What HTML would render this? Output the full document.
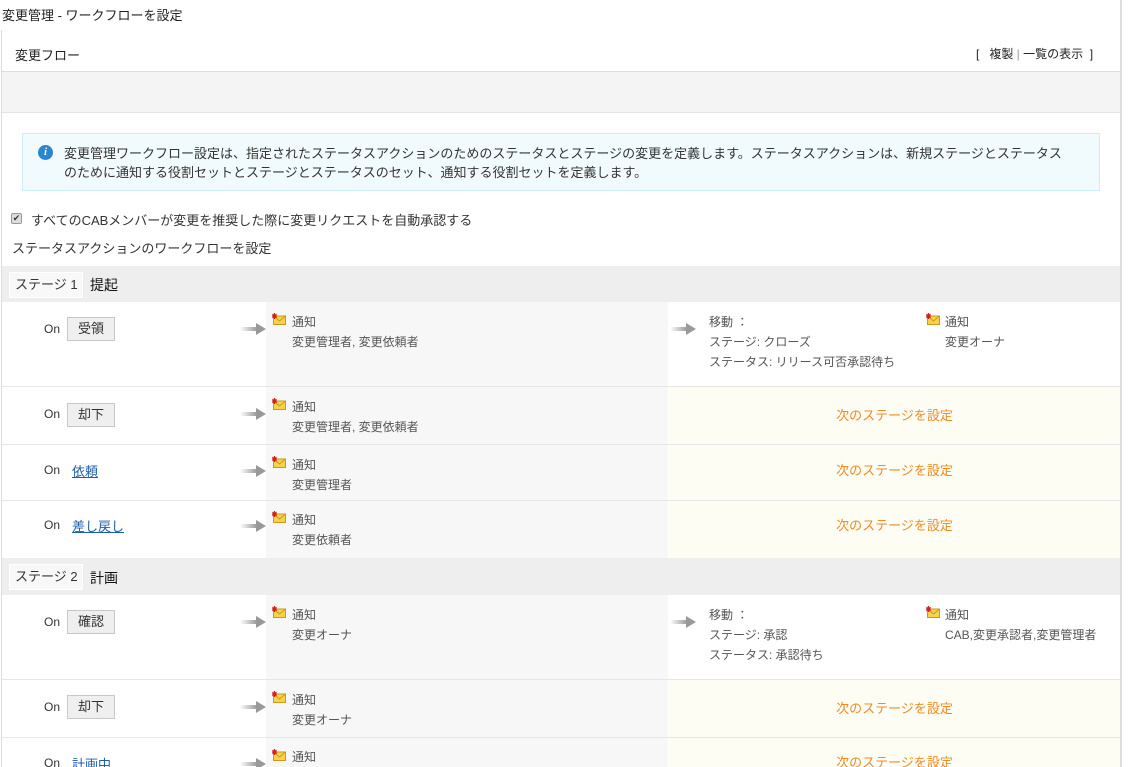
<!DOCTYPE html>
<html style="overflow:hidden;height:767px"><head><meta charset="utf-8"><style>
*{margin:0;padding:0;box-sizing:border-box}
body{width:1135px;height:767px;overflow:hidden;background:#fff;font-family:"Liberation Sans","Noto Sans CJK JP",sans-serif;font-size:12px;color:#333;position:relative}
.a{position:absolute;white-space:nowrap}
.g{color:#555}
.btn{position:absolute;left:67px;width:48px;height:24px;background:#efefef;border:1px solid #c8c8c8;text-align:center;line-height:22px;font-size:13px;color:#333}
.lnk{position:absolute;left:72px;font-size:13px;color:#1d5fa8;text-decoration:underline}
.on{position:absolute;left:44px;font-size:12px;color:#333}
.ncol{position:absolute;left:266px;width:402px;background:#f7f7f7}
.nxt{position:absolute;left:669px;width:451px;background:#fdfdf4;color:#f08a24;font-size:13px;text-align:center}
.sep{position:absolute;left:2px;width:1118px;height:1px;background:#e6e6e6}
.arr{position:absolute;width:26px;height:12px}
.ic{position:absolute;width:14px;height:12px}
.sh{position:absolute;left:2px;width:1118px;background:#eeeeee}
.sl{position:absolute;left:9px;width:74px;height:26px;background:#f8f8f8;border:1px solid #fff;font-size:13px;line-height:24px;padding-left:5px;color:#333}
</style></head><body>
<svg width="0" height="0" style="position:absolute"><defs>
<linearGradient id="gr" x1="0" x2="1"><stop offset="0" stop-color="#fff"/><stop offset="1" stop-color="#999"/></linearGradient>
<g id="env"><rect x="1.5" y="3" width="12" height="8.5" fill="#f7d24a" stroke="#c99a1c" stroke-width="1"/><path d="M1.5 3 L7.5 8 L13.5 3" fill="none" stroke="#c99a1c"/><path d="M2.5 0 L2.5 6 M0 3 L5 3 M0.5 1 L4.5 5 M4.5 1 L0.5 5" stroke="#d0201a" stroke-width="1.2"/></g>
<g id="ar"><rect x="0" y="4" width="17" height="4" fill="url(#gr)"/><path d="M16 0 L26 6 L16 12Z" fill="#999"/></g>
</defs></svg>
<div class="a" style="left:2px;top:5px;font-size:13px;color:#222">変更管理 - ワークフローを設定</div>
<div class="a" style="left:15px;top:45px;font-size:13px;color:#222">変更フロー</div>
<div class="a" style="left:976px;top:45px;font-size:12px;color:#222">[&nbsp;&nbsp; 複製 <span style="color:#999">|</span> 一覧の表示 &nbsp;]</div>
<div class="a" style="left:1px;top:30px;width:1px;height:737px;background:#ddd"></div>
<div class="a" style="left:1120px;top:0;width:2px;height:767px;background:#ddd"></div>
<div class="a" style="left:2px;top:71px;width:1118px;height:42px;background:#f4f4f4;border-top:1px solid #ddd;border-bottom:1px solid #e4e4e4"></div>
<div class="a" style="left:22px;top:133px;width:1078px;height:58px;background:#f1fbfd;border:1px solid #cdeef7"></div>
<div class="a" style="left:38px;top:145px;width:15px;height:15px;border-radius:50%;background:#2a86d0;color:#fff;font:bold italic 11px 'Liberation Serif',serif;text-align:center;line-height:15px">i</div>
<div class="a" style="left:64px;top:144px;font-size:13px;line-height:19px;color:#333">変更管理ワークフロー設定は、指定されたステータスアクションのためのステータスとステージの変更を定義します。ステータスアクションは、新規ステージとステータス<br>のために通知する役割セットとステージとステータスのセット、通知する役割セットを定義します。</div>
<div class="a" style="left:11px;top:213px;width:11px;height:11px;background:#ddd;border:1px solid #999;border-radius:2px;font-size:9px;line-height:9px;text-align:center;color:#333">✔</div>
<div class="a" style="left:31px;top:210px;font-size:13px;color:#333">すべてのCABメンバーが変更を推奨した際に変更リクエストを自動承認する</div>
<div class="a" style="left:12px;top:238px;font-size:13px;color:#333">ステータスアクションのワークフローを設定</div>

<div class="sh" style="top:266px;height:36px"></div>
<div class="sl" style="top:272px">ステージ 1</div>
<div class="a" style="left:90px;top:275px;font-size:14px;color:#111">提起</div>

<div class="ncol" style="top:302px;height:84px"></div>
<div class="on" style="top:322px">On</div><div class="btn" style="top:317px">受領</div>
<svg class="arr" style="left:240px;top:323px"><use href="#ar"/></svg>
<svg class="ic" style="left:272px;top:313px"><use href="#env"/></svg>
<div class="a g" style="left:292px;top:312px;line-height:20px">通知<br>変更管理者, 変更依頼者</div>
<svg class="arr" style="left:670px;top:323px"><use href="#ar"/></svg>
<div class="a g" style="left:709px;top:312px;line-height:20px">移動 ：<br>ステージ: クローズ<br>ステータス: リリース可否承認待ち</div>
<svg class="ic" style="left:926px;top:313px"><use href="#env"/></svg>
<div class="a g" style="left:945px;top:312px;line-height:20px">通知<br>変更オーナ</div>
<div class="sep" style="top:386px"></div>

<div class="ncol" style="top:387px;height:57px"></div>
<div class="nxt" style="top:387px;height:57px;line-height:57px">次のステージを設定</div>
<div class="on" style="top:407px">On</div><div class="btn" style="top:403px">却下</div>
<svg class="arr" style="left:240px;top:408px"><use href="#ar"/></svg>
<svg class="ic" style="left:272px;top:398px"><use href="#env"/></svg>
<div class="a g" style="left:292px;top:397px;line-height:20px">通知<br>変更管理者, 変更依頼者</div>
<div class="sep" style="top:444px"></div>

<div class="ncol" style="top:445px;height:55px"></div>
<div class="nxt" style="top:445px;height:55px;line-height:52px">次のステージを設定</div>
<div class="on" style="top:463px">On</div><div class="lnk" style="top:461px">依頼</div>
<svg class="arr" style="left:240px;top:465px"><use href="#ar"/></svg>
<svg class="ic" style="left:272px;top:456px"><use href="#env"/></svg>
<div class="a g" style="left:292px;top:455px;line-height:20px">通知<br>変更管理者</div>
<div class="sep" style="top:500px"></div>

<div class="ncol" style="top:501px;height:57px"></div>
<div class="nxt" style="top:501px;height:57px;line-height:50px">次のステージを設定</div>
<div class="on" style="top:518px">On</div><div class="lnk" style="top:516px">差し戻し</div>
<svg class="arr" style="left:240px;top:520px"><use href="#ar"/></svg>
<svg class="ic" style="left:272px;top:511px"><use href="#env"/></svg>
<div class="a g" style="left:292px;top:510px;line-height:20px">通知<br>変更依頼者</div>

<div class="sh" style="top:558px;height:37px"></div>
<div class="sl" style="top:564px">ステージ 2</div>
<div class="a" style="left:90px;top:568px;font-size:14px;color:#111">計画</div>

<div class="ncol" style="top:595px;height:84px"></div>
<div class="on" style="top:615px">On</div><div class="btn" style="top:610px">確認</div>
<svg class="arr" style="left:240px;top:616px"><use href="#ar"/></svg>
<svg class="ic" style="left:272px;top:606px"><use href="#env"/></svg>
<div class="a g" style="left:292px;top:605px;line-height:20px">通知<br>変更オーナ</div>
<svg class="arr" style="left:670px;top:616px"><use href="#ar"/></svg>
<div class="a g" style="left:709px;top:605px;line-height:20px">移動 ：<br>ステージ: 承認<br>ステータス: 承認待ち</div>
<svg class="ic" style="left:926px;top:606px"><use href="#env"/></svg>
<div class="a g" style="left:945px;top:605px;line-height:20px">通知<br>CAB,変更承認者,変更管理者</div>
<div class="sep" style="top:679px"></div>

<div class="ncol" style="top:680px;height:57px"></div>
<div class="nxt" style="top:680px;height:57px;line-height:57px">次のステージを設定</div>
<div class="on" style="top:700px">On</div><div class="btn" style="top:695px">却下</div>
<svg class="arr" style="left:240px;top:701px"><use href="#ar"/></svg>
<svg class="ic" style="left:272px;top:691px"><use href="#env"/></svg>
<div class="a g" style="left:292px;top:690px;line-height:20px">通知<br>変更オーナ</div>
<div class="sep" style="top:737px"></div>

<div class="ncol" style="top:738px;height:29px"></div>
<div class="nxt" style="top:738px;height:29px;line-height:50px;overflow:hidden">次のステージを設定</div>
<div class="on" style="top:756px">On</div><div class="lnk" style="top:754px">計画中</div>
<svg class="arr" style="left:240px;top:758px"><use href="#ar"/></svg>
<svg class="ic" style="left:272px;top:749px"><use href="#env"/></svg>
<div class="a g" style="left:292px;top:748px">通知</div>
</body></html>
